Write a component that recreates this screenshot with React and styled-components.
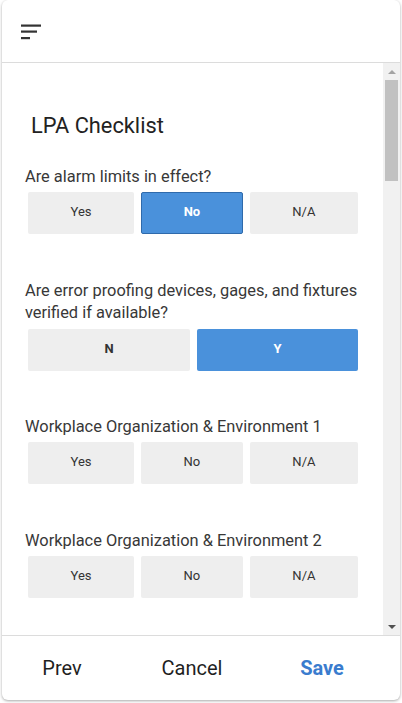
import React from "react";
import styled, { createGlobalStyle } from "styled-components";

const GlobalStyle = createGlobalStyle`
  html, body {
    margin: 0;
    padding: 0;
    background: #ffffff;
    font-family: Roboto, "Liberation Sans", Arial, sans-serif;
  }
`;

const Page = styled.div`
  width: 402px;
  height: 703px;
  padding: 0 2px 3px 2px;
  box-sizing: border-box;
`;

const Card = styled.div`
  height: 700px;
  display: flex;
  flex-direction: column;
  background: #fff;
  border-radius: 6px;
  box-shadow: 0 1px 3px rgba(0, 0, 0, 0.35);
  overflow: hidden;
`;

const Header = styled.div`
  height: 62px;
  flex: none;
  display: flex;
  align-items: center;
  padding-left: 19px;
  border-bottom: 1px solid #dcdcdc;
`;

const MenuButton = styled.button`
  border: none;
  background: none;
  padding: 0;
  width: 22px;
  height: 20px;
  display: flex;
  cursor: pointer;
`;

const Body = styled.div`
  flex: 1;
  display: flex;
  min-height: 0;
`;

const Content = styled.div`
  flex: 1;
  overflow: hidden;
  padding: 50px 25px 0 23px;
`;

const Title = styled.h1`
  margin: 0 0 27px 6px;
  font-size: 21.8px;
  line-height: 26px;
  font-weight: 400;
  color: #222;
`;

const Question = styled.div`
  margin-bottom: ${(p) => (p.$tall ? 45 : 46)}px;
`;

const Label = styled.div`
  font-size: 16.4px;
  line-height: 22px;
  color: #383838;
  margin-bottom: ${(p) => (p.$tall ? 5 : 4)}px;
`;

const Options = styled.div`
  display: flex;
  gap: 7px;
  margin-left: 3px;
`;

const Option = styled.button`
  flex: 1 1 auto;
  height: 42px;
  border-radius: 2px;
  font-family: inherit;
  font-size: 13px;
  font-weight: ${(p) => (p.$bold || p.$active ? 700 : 400)};
  color: ${(p) => (p.$active ? "#fff" : "#333")};
  background: ${(p) => (p.$active ? "#4a91db" : "#eeeeee")};
  border: 1px solid
    ${(p) => (p.$active && p.$outlined ? "#2f6aab" : "transparent")};
  padding: 0 0 3px 0;
  cursor: pointer;
`;

const Scrollbar = styled.div`
  width: 17px;
  flex: none;
  background: #f1f1f1;
  display: flex;
  flex-direction: column;
  align-items: center;
`;

const Arrow = styled.div`
  height: 17px;
  flex: none;
  display: flex;
  align-items: center;
  justify-content: center;
  &::before {
    content: "";
    border-left: 4px solid transparent;
    border-right: 4px solid transparent;
    ${(p) =>
      p.$down
        ? "border-top: 4px solid #505050;"
        : "border-bottom: 4px solid #a3a3a3;"}
  }
`;

const Track = styled.div`
  flex: 1;
  width: 100%;
  display: flex;
  justify-content: center;
`;

const Thumb = styled.div`
  width: 13px;
  height: 101px;
  background: #c1c1c1;
`;

const Footer = styled.div`
  height: 64px;
  flex: none;
  border-top: 1px solid #dcdcdc;
  display: grid;
  grid-template-columns: repeat(3, 120px);
  column-gap: 10px;
  align-items: center;
`;

const FooterButton = styled.button`
  border: none;
  background: none;
  font-family: inherit;
  font-size: 20px;
  line-height: 24px;
  font-weight: ${(p) => (p.$primary ? 700 : 400)};
  color: ${(p) => (p.$primary ? "#3a7cce" : "#1f1f1f")};
  cursor: pointer;
  padding: 0;
`;

const questions = [
  {
    text: "Are alarm limits in effect?",
    options: ["Yes", "No", "N/A"],
    selected: "No",
    outlined: true,
  },
  {
    text: "Are error proofing devices, gages, and fixtures verified if available?",
    options: ["N", "Y"],
    selected: "Y",
    bold: true,
    tall: true,
  },
  { text: "Workplace Organization & Environment 1", options: ["Yes", "No", "N/A"] },
  { text: "Workplace Organization & Environment 2", options: ["Yes", "No", "N/A"] },
];

const SortIcon = () => (
  <svg width="22" height="20" viewBox="0 0 22 20">
    <g fill="#333">
      <rect x="0" y="3.5" width="20" height="2.2" />
      <rect x="0" y="9.5" width="16" height="2.2" />
      <rect x="0" y="16" width="9" height="2.2" />
    </g>
  </svg>
);

export default function App() {
  return (
    <Page>
      <GlobalStyle />
      <Card>
        <Header>
          <MenuButton aria-label="menu">
            <SortIcon />
          </MenuButton>
        </Header>
        <Body>
          <Content>
            <Title>LPA Checklist</Title>
            {questions.map((q) => (
              <Question key={q.text} $tall={q.tall}>
                <Label $tall={q.tall}>{q.text}</Label>
                <Options>
                  {q.options.map((o) => (
                    <Option
                      key={o}
                      $active={o === q.selected}
                      $outlined={q.outlined}
                      $bold={q.bold}
                    >
                      {o}
                    </Option>
                  ))}
                </Options>
              </Question>
            ))}
          </Content>
          <Scrollbar>
            <Arrow />
            <Track>
              <Thumb />
            </Track>
            <Arrow $down />
          </Scrollbar>
        </Body>
        <Footer>
          <FooterButton>Prev</FooterButton>
          <FooterButton>Cancel</FooterButton>
          <FooterButton $primary>Save</FooterButton>
        </Footer>
      </Card>
    </Page>
  );
}
